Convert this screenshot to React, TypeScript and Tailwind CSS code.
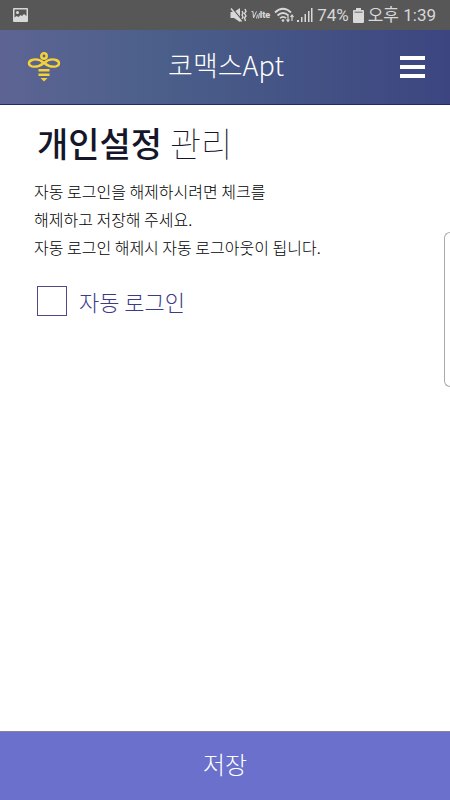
import { useState } from 'react'

function StatusBar() {
  return (
    <div className="flex h-[30px] items-center justify-between bg-[#575757] pl-[13px] pr-3.5 text-[#d8d8d8]">
      <svg viewBox="0 0 15 14" className="h-3.5 w-[15px]" aria-hidden="true">
        <path
          fillRule="evenodd"
          fill="currentColor"
          d="M1 0h13a1 1 0 0 1 1 1v12a1 1 0 0 1-1 1H1a1 1 0 0 1-1-1V1a1 1 0 0 1 1-1ZM1.500 1.500v8l2-1.500 2 1 2-2 1.500 1 2-2 2.500 2V1.500Z"
        />
        <circle cx="4.500" cy="4.500" r="1.500" fill="currentColor" />
      </svg>
      <div className="flex items-center">
        <svg viewBox="0 0 17 16" className="h-4 w-[17px]" fill="none" stroke="currentColor" aria-hidden="true">
          <path d="M0.500 5h3.500l6-4v14l-6-4H0.500Z" fill="currentColor" stroke="none" />
          <path d="M2 1l10 12" stroke="#575757" strokeWidth="1.200" />
          <path d="M1 1.500l10.500 13" strokeWidth="1.500" />
          <path d="M12 4l1 2-1 2 1 2-1 2M15 2l1 2.500-1.500 2 1.500 2.500-1.500 2 1 3" strokeWidth="1.400" />
        </svg>
        <span className="ml-1 flex items-center font-['Roboto',sans-serif] text-[9px] leading-none font-black">
          <svg viewBox="0 0 9 10" className="h-2.5 w-[9px]" fill="none" stroke="currentColor" aria-hidden="true">
            <path d="M0.500 1.500h1.500L2.500 8l3-6.500M6.500 4.500L5.500 8.500M8.500 3L7.500 8.500" />
          </svg>
          lte
        </span>
        <svg viewBox="0 0 21 16" className="ml-1 h-4 w-[21px]" fill="none" stroke="currentColor" strokeWidth="1.800" aria-hidden="true">
          <path d="M1 5.500Q9 -2 17 5.500M3.500 8.500Q9 3.500 14.500 8.500M6 11.200Q9 8.500 12 11.200" />
          <circle cx="9" cy="13.500" r="1.300" fill="currentColor" stroke="none" />
          <path d="M14 8.500v5.500M12.500 12.500l1.500 2 1.500-2M18 14V8.500M16.500 10L18 8l1.500 2" strokeWidth="1.200" />
        </svg>
        <svg viewBox="0 0 16 16" className="ml-0.5 h-4 w-4" fill="currentColor" aria-hidden="true">
          <path d="M0 13h2v2H0ZM4 10h1.500v5H4ZM7.500 7H9v8H7.500ZM11 4h1.500v11H11ZM14 1h1.500v14H14Z" />
        </svg>
        <span className="ml-1 font-['Roboto',sans-serif] text-[17px] leading-none">74%</span>
        <svg viewBox="0 0 11 15" className="ml-1 h-[15px] w-[11px]" fill="currentColor" aria-hidden="true">
          <path d="M3 0h5v2h2a1 1 0 0 1 1 1v11a1 1 0 0 1-1 1H1a1 1 0 0 1-1-1V3a1 1 0 0 1 1-1h2Z" />
          <path d="M1.500 3.500h8v1.500h-8Z" fill="#8b8b8b" />
        </svg>
        <span className="ml-1 font-['Roboto','Noto_Sans_CJK_KR',sans-serif] text-[17px] leading-none">오후 1:39</span>
      </div>
    </div>
  )
}

function BeeLogo() {
  return (
    <svg viewBox="0 0 34 30" className="h-[30px] w-[34px]" fill="none" stroke="#f6d335" aria-hidden="true">
      <circle cx="17" cy="4" r="2.700" strokeWidth="2.500" />
      <path
        d="M17 11C13 7.500 8 7 5 8C1 9.300 1 13.200 5 14.300C9 15.300 13 14 17 11C21 7.500 26 7 29 8C33 9.300 33 13.200 29 14.300C25 15.300 21 14 17 11Z"
        strokeWidth="2.400"
      />
      <path d="M11.500 18.200h11M11.500 22.700h11" strokeWidth="2.500" />
      <path d="M13.500 26h7l-3.500 3.500Z" fill="#f6d335" stroke="none" />
    </svg>
  )
}

function Header() {
  return (
    <header className="grid h-[75px] grid-cols-[1fr_auto_1fr] items-center border-b border-[#202c60] bg-linear-to-r from-[#5d6494] via-[#4b5f8a] via-35% to-[#3c4580] pl-[27px] pr-[25px]">
      <a href="#home" aria-label="홈">
        <BeeLogo />
      </a>
      <h1 className="pb-1 text-[27px] leading-8 font-light text-white">코맥스Apt</h1>
      <button type="button" aria-label="메뉴" className="flex flex-col gap-[5px] justify-self-end">
        <span className="h-1 w-[25px] bg-white" />
        <span className="h-1 w-[25px] bg-white" />
        <span className="h-1 w-[25px] bg-white" />
      </button>
    </header>
  )
}

export default function App() {
  const [autoLogin, setAutoLogin] = useState(false)

  return (
    <div className="relative flex min-h-screen flex-col bg-white font-['Noto_Sans_CJK_KR',sans-serif]">
      <StatusBar />
      <Header />
      <main className="flex-1 px-[34px] pt-4">
        <h2 className="pl-[3px] text-[34px] leading-[44px] font-medium text-[#15162a]">
          개인설정 <span className="font-thin">관리</span>
        </h2>
        <p className="mt-3 text-base leading-7 font-light text-black">
          자동 로그인을 해제하시려면 체크를
          <br />
          해제하고 저장해 주세요.
          <br />
          자동 로그인 해제시 자동 로그아웃이 됩니다.
        </p>
        <label className="mt-6 ml-[3px] flex w-fit items-center gap-3 text-[22px] leading-8 font-light text-[#3d3b87]">
          <input
            type="checkbox"
            checked={autoLogin}
            onChange={(e) => setAutoLogin(e.target.checked)}
            className="size-[30px] appearance-none border border-[#4e4889] checked:bg-[#6a70cb]"
          />
          자동 로그인
        </label>
      </main>
      <button type="button" className="h-[69px] border-t border-[#858498] bg-[#6a70cb] pb-1 text-2xl font-light text-white">
        저장
      </button>
      {/* edge panel handle */}
      <div className="absolute top-[232px] right-0 h-[155px] w-1.5 rounded-l-md border border-r-0 border-[#aaa]" />
    </div>
  )
}
